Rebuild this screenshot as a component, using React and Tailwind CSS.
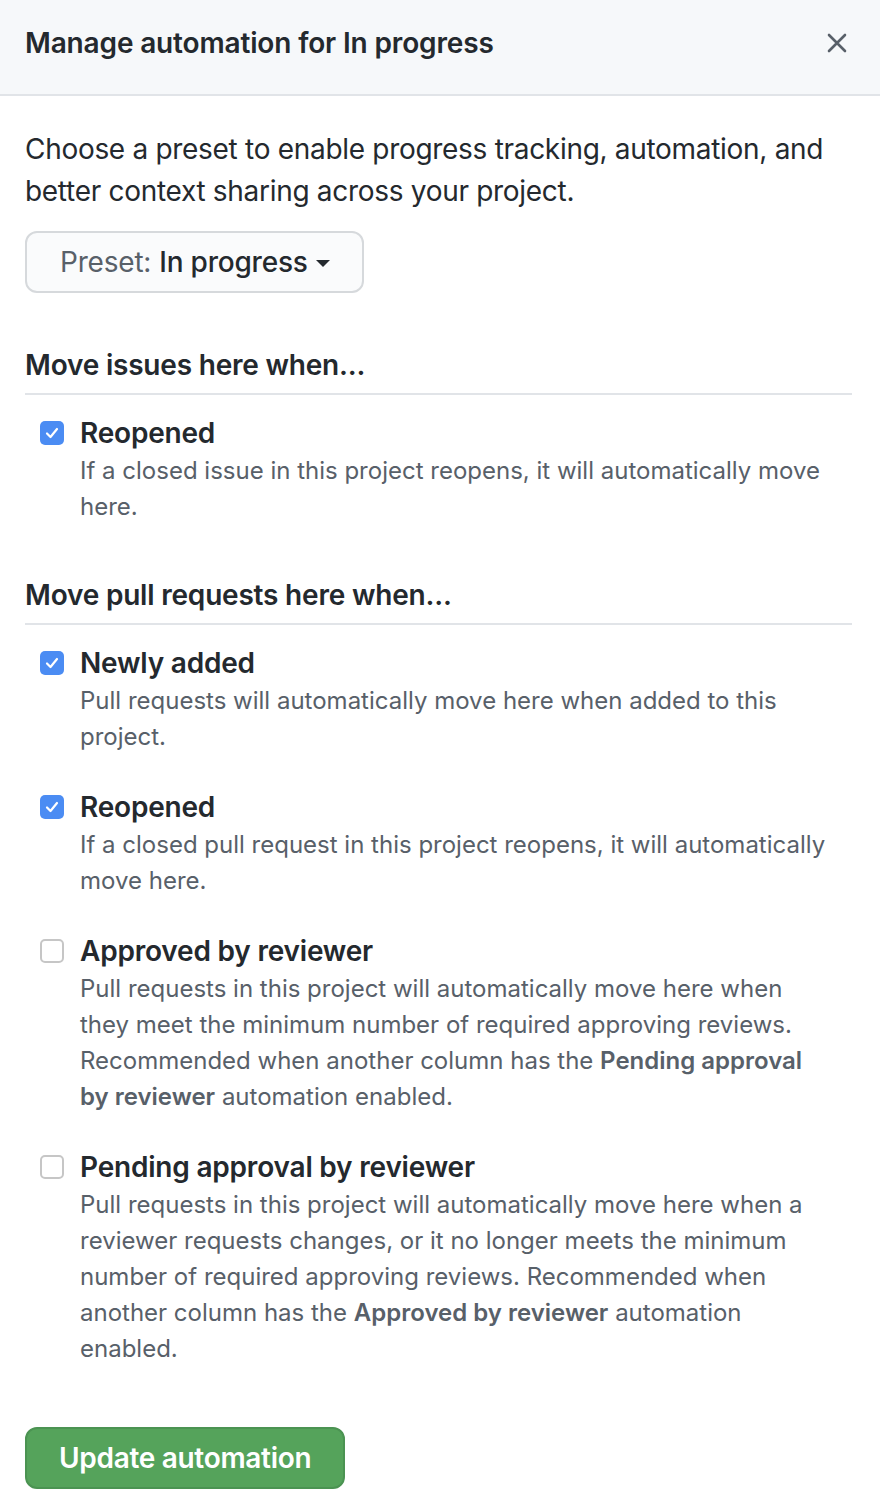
import React from 'react';

const items = {
  issues: [
    {
      label: 'Reopened',
      checked: true,
      desc: 'If a closed issue in this project reopens, it will automatically move here.',
    },
  ],
  pulls: [
    {
      label: 'Newly added',
      checked: true,
      desc: 'Pull requests will automatically move here when added to this project.',
    },
    {
      label: 'Reopened',
      checked: true,
      desc: 'If a closed pull request in this project reopens, it will automatically move here.',
    },
    {
      label: 'Approved by reviewer',
      checked: false,
      desc: (
        <>
          Pull requests in this project will automatically move here when they meet the minimum number of required
          approving reviews. Recommended when another column has the{' '}
          <strong className="font-semibold">Pending approval by reviewer</strong> automation enabled.
        </>
      ),
    },
    {
      label: 'Pending approval by reviewer',
      checked: false,
      desc: (
        <>
          Pull requests in this project will automatically move here when a reviewer requests changes, or it no longer
          meets the minimum number of required approving reviews. Recommended when another column has the{' '}
          <strong className="font-semibold">Approved by reviewer</strong> automation enabled.
        </>
      ),
    },
  ],
};

const Checkbox = ({ checked }) =>
  checked ? (
    <span className="mt-[6px] flex h-[24px] w-[24px] shrink-0 items-center justify-center rounded-[5px] bg-[#4b8cf3]">
      <svg width="14" height="12" viewBox="0 0 14 12" fill="none">
        <path d="M2 6.5L5.5 10L12 2" stroke="white" strokeWidth="2.2" strokeLinecap="round" strokeLinejoin="round" />
      </svg>
    </span>
  ) : (
    <span className="mt-[6px] block h-[24px] w-[24px] shrink-0 rounded-[5px] border-2 border-[#c6c6c6] bg-white" />
  );

const Option = ({ item }) => (
  <div className="flex gap-[16px] pl-[15px]">
    <Checkbox checked={item.checked} />
    <div className="pr-[24px]">
      <div className="text-[28px] font-semibold leading-[36px] tracking-[-0.2px] text-[#24292e]">{item.label}</div>
      <p className="mt-[2px] text-[24px] leading-[36px] text-[#586069]">{item.desc}</p>
    </div>
  </div>
);

const Section = ({ title, list, className }) => (
  <div className={className}>
    <h3 className="border-b-2 border-[#e1e4e8] pb-[10px] text-[28px] font-semibold leading-[36px] tracking-[-0.2px] text-[#24292e]">
      {title}
    </h3>
    <div className="mt-[20px] flex flex-col gap-[34px]">
      {list.map((item, i) => (
        <Option key={i + item.label} item={item} />
      ))}
    </div>
  </div>
);

const App = () => {
  return (
    <div className="min-h-[1504px] w-[880px] bg-white font-['Inter','Noto_Sans',sans-serif] text-[#24292e]">
      {/** Header **/}
      <div className="flex h-[96px] items-center justify-between border-b-2 border-[#e1e4e8] bg-[#f6f8fa] pl-[25px] pr-[32px]">
        <h2 className="pb-[8px] text-[28px] font-semibold tracking-[-0.15px] text-[#24292e]">
          Manage automation for In progress
        </h2>
        <svg width="22" height="22" viewBox="0 0 22 22" className="mb-[8px]">
          <path d="M3 3L19 19M19 3L3 19" stroke="#586069" strokeWidth="2.6" strokeLinecap="round" />
        </svg>
      </div>

      <div className="pl-[25px] pr-[28px] pt-[32px]">
        <p className="text-[28px] leading-[42px] tracking-[-0.3px] text-[#24292e]">
          Choose a preset to enable progress tracking, automation, and better context sharing across your project.
        </p>

        <button className="mt-[19px] flex h-[62px] items-center rounded-[12px] border-2 border-[#d6d9dc] bg-[#fafbfc] pl-[33px] pr-[32px] text-[28px] tracking-[-0.2px]">
          <span className="text-[#586069]">Preset:</span>
          <span className="ml-[8px] font-medium text-[#24292e]">In progress</span>
          <span className="ml-[8px] mt-[2px] h-0 w-0 border-x-[7px] border-t-[7px] border-x-transparent border-t-[#24292e]" />
        </button>

        <Section title="Move issues here when..." list={items.issues} className="mt-[54px]" />
        <Section title="Move pull requests here when..." list={items.pulls} className="mt-[52px]" />

        <button className="mt-[60px] flex h-[62px] items-center rounded-[12px] border-2 border-[#4b9352] bg-[#55a35b] px-[32px] text-[28px] font-semibold tracking-[-0.3px] text-white">
          Update automation
        </button>
      </div>
    </div>
  );
};

export default App;
